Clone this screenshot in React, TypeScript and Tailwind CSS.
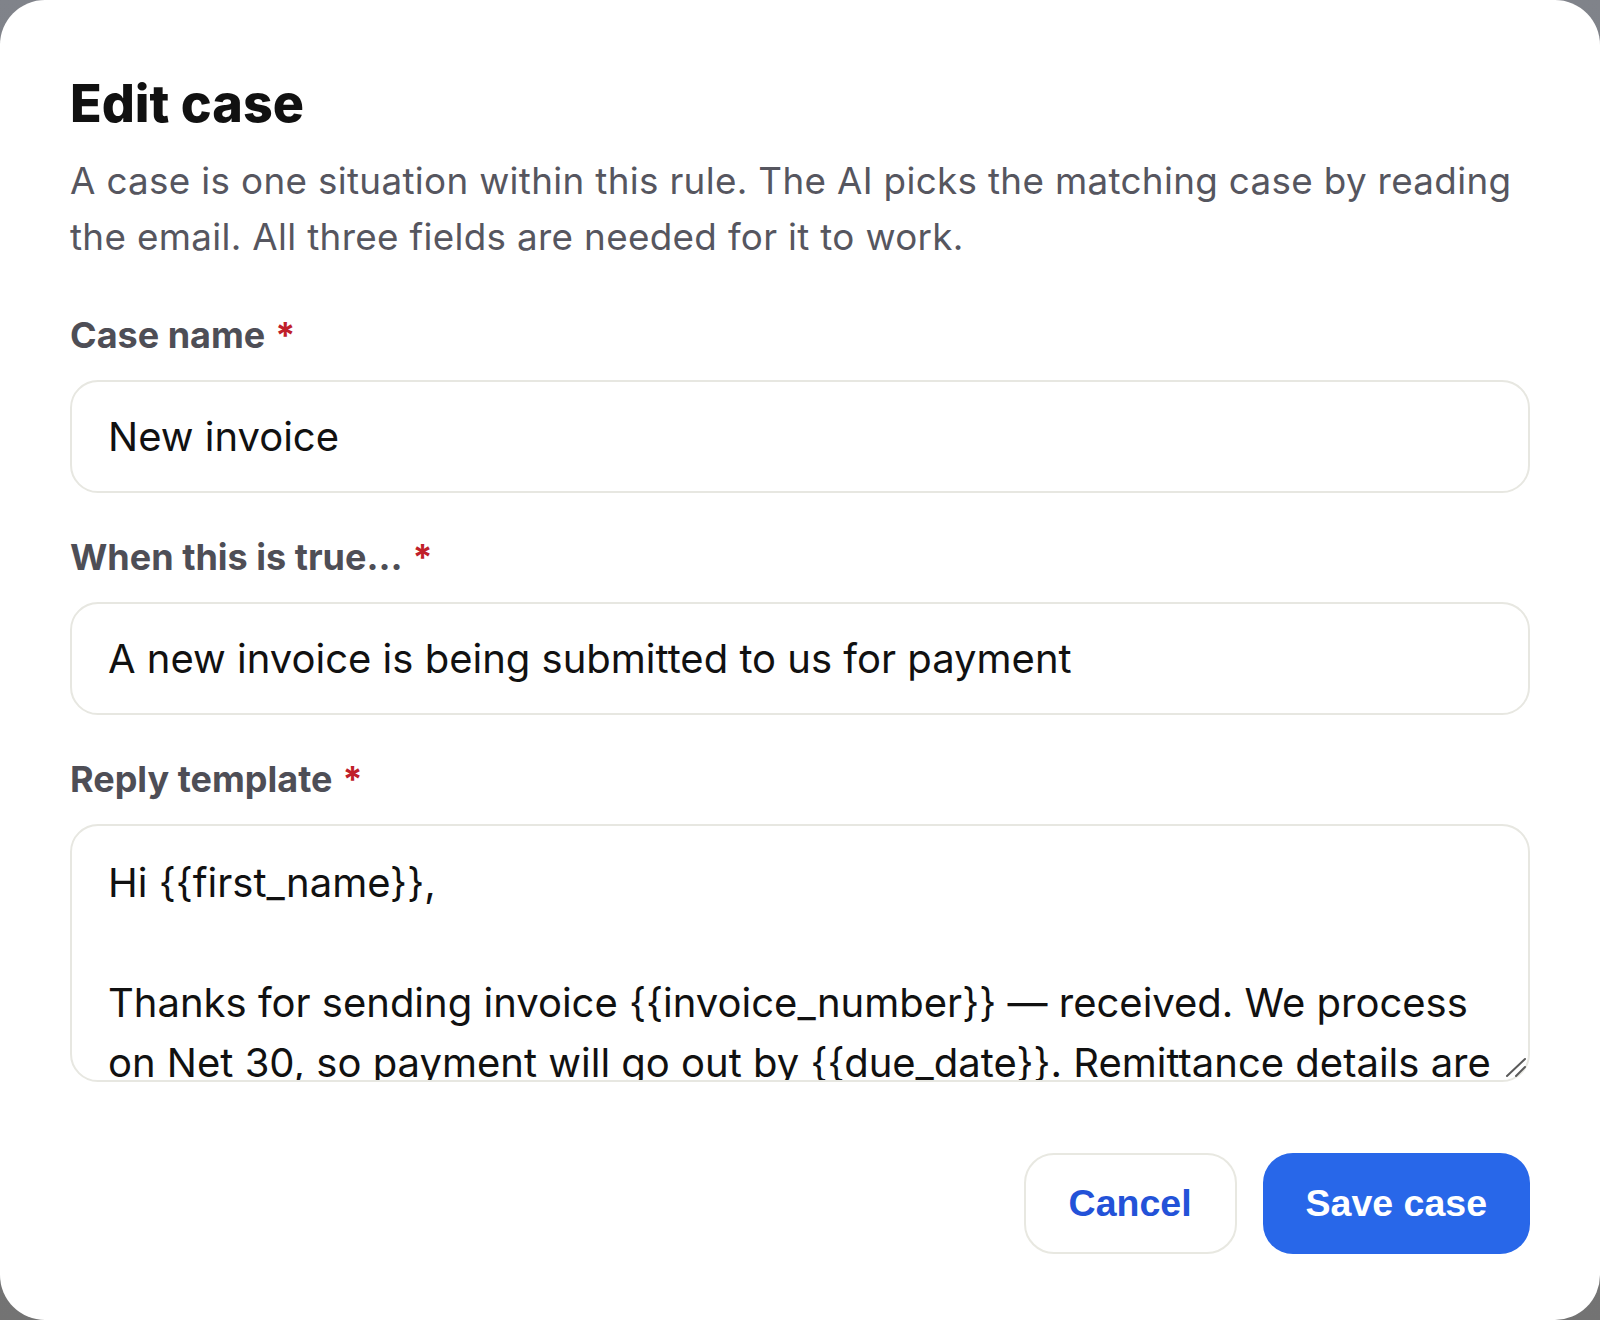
import { useState } from "react"

const fieldLabel = "block text-[36px] leading-[48px] font-bold text-[#4e4e56] mb-[21px]"
const fieldBox = "w-full rounded-[28px] border-2 border-[#e7e7e1] bg-white px-[36px] text-[40px] leading-[60px] text-[#111111] outline-none"

const initialReply = `Hi {{first_name}},

Thanks for sending invoice {{invoice_number}} — received. We process on Net 30, so payment will go out by {{due_date}}. Remittance details are attached for your records.

Best,
Accounts Payable`

const Required = () => <span className="ml-[10px] text-[#c0202a]">*</span>

export default function App() {
  const [name, setName] = useState("New invoice")
  const [condition, setCondition] = useState("A new invoice is being submitted to us for payment")
  const [reply, setReply] = useState(initialReply)

  return (
    <div className="w-full h-[1320px] bg-gradient-to-b from-[#80838a] to-[#737373] [font-family:Inter,'Noto_Sans',sans-serif]">
      <div className="h-full w-full rounded-[45px] bg-white flex flex-col px-[70px] pt-[74px] pb-[66px]">
        <h1 className="text-[52px] leading-[60px] font-extrabold text-[#111111]">Edit case</h1>
        <p className="mt-[19px] text-[36.8px] leading-[56px] tracking-[0.009em] text-[#56565f]">
          A case is one situation within this rule. The AI picks the matching case by reading the email. All three fields are needed for it to work.
        </p>

        <div className="mt-[46px] flex flex-col gap-[40px]">
          {/* case name */}
          <div>
            <label className={fieldLabel}>
              Case name<Required />
            </label>
            <input
              className={`${fieldBox} h-[113px]`}
              value={name}
              onChange={(e) => setName(e.target.value)}
            />
          </div>

          {/* condition */}
          <div>
            <label className={fieldLabel}>
              When this is true…<Required />
            </label>
            <input
              className={`${fieldBox} h-[113px]`}
              value={condition}
              onChange={(e) => setCondition(e.target.value)}
            />
          </div>

          {/* reply */}
          <div>
            <label className={fieldLabel}>
              Reply template<Required />
            </label>
            <div className="relative">
              <textarea
                className={`${fieldBox} block h-[258px] pt-[27px] pr-[24px] resize-none overflow-hidden [scrollbar-width:none]`}
                value={reply}
                onChange={(e) => setReply(e.target.value)}
              />
              <svg className="absolute right-[3px] bottom-[4px] w-[22px] h-[22px] pointer-events-none" viewBox="0 0 22 22" fill="none">
                <path d="M2 20 L20 3" stroke="#5a5a5a" strokeWidth="2" strokeLinecap="round" />
                <path d="M11 20 L20 11" stroke="#5a5a5a" strokeWidth="2" strokeLinecap="round" />
              </svg>
            </div>
          </div>
        </div>

        <div className="mt-[71px] flex justify-end gap-[26px] [font-family:'Liberation_Sans',Arial,sans-serif]">
          <button className="h-[101px] px-[43px] rounded-[30px] border-2 border-[#e8e8e1] bg-white text-[37.5px] font-bold text-[#2352d8]">
            Cancel
          </button>
          <button className="h-[101px] px-[43px] rounded-[30px] bg-[#2867e9] text-[37.5px] font-bold text-white">
            Save case
          </button>
        </div>
      </div>
    </div>
  )
}
